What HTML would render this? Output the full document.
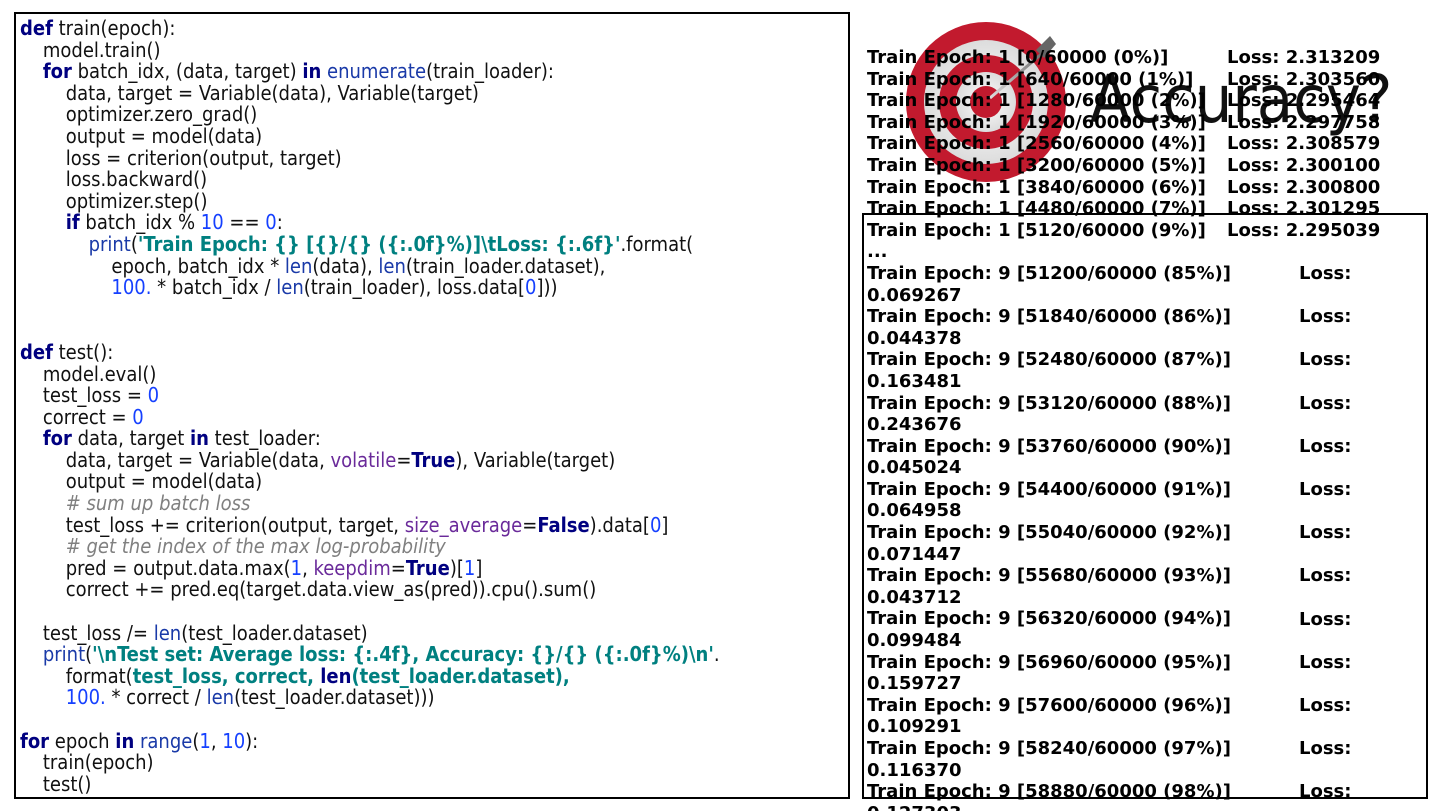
<!DOCTYPE html>
<html><head><meta charset="utf-8"><style>
html,body{margin:0;padding:0;background:#fff;width:1440px;height:811px;overflow:hidden;position:relative}
.box{position:absolute;border:2px solid #000;box-sizing:border-box}
pre{margin:0;font-family:"DejaVu Sans","Liberation Sans",sans-serif;}
.code{position:absolute;left:20px;top:18px;font-size:20px;line-height:21.6px;font-stretch:condensed;color:#111;white-space:pre}
.k{color:#000080;font-weight:bold}
.b{color:#1a3aa8}
.n{color:#1540ff}
.s{color:#008080;font-weight:bold}
.p{color:#6a2a9a}
.c{color:#808080;font-style:italic}
.out{position:absolute;font-family:"DejaVu Sans","Liberation Sans",sans-serif;font-weight:bold;font-size:18px;color:#000;line-height:21.6px;white-space:pre}
</style></head><body>
<div class="box" style="left:14px;top:12px;width:836px;height:787px"></div>
<pre class="code"><span class="k">def</span> train(epoch):
    model.train()
    <span class="k">for</span> batch_idx, (data, target) <span class="k">in</span> <span class="b">enumerate</span>(train_loader):
        data, target = Variable(data), Variable(target)
        optimizer.zero_grad()
        output = model(data)
        loss = criterion(output, target)
        loss.backward()
        optimizer.step()
        <span class="k">if</span> batch_idx % <span class="n">10</span> == <span class="n">0</span>:
            <span class="b">print</span>(<span class="s">'Train Epoch: {} [{}/{} ({:.0f}%)]\tLoss: {:.6f}'</span>.format(
                epoch, batch_idx * <span class="b">len</span>(data), <span class="b">len</span>(train_loader.dataset),
                <span class="n">100.</span> * batch_idx / <span class="b">len</span>(train_loader), loss.data[<span class="n">0</span>]))


<span class="k">def</span> test():
    model.eval()
    test_loss = <span class="n">0</span>
    correct = <span class="n">0</span>
    <span class="k">for</span> data, target <span class="k">in</span> test_loader:
        data, target = Variable(data, <span class="p">volatile</span>=<span class="k">True</span>), Variable(target)
        output = model(data)
        <span class="c"># sum up batch loss</span>
        test_loss += criterion(output, target, <span class="p">size_average</span>=<span class="k">False</span>).data[<span class="n">0</span>]
        <span class="c"># get the index of the max log-probability</span>
        pred = output.data.max(<span class="n">1</span>, <span class="p">keepdim</span>=<span class="k">True</span>)[<span class="n">1</span>]
        correct += pred.eq(target.data.view_as(pred)).cpu().sum()

    test_loss /= <span class="b">len</span>(test_loader.dataset)
    <span class="b">print</span>(<span class="s">'\nTest set: Average loss: {:.4f}, Accuracy: {}/{} ({:.0f}%)\n'</span>.
        format(<span class="s">test_loss, correct, <span class="k">len</span>(test_loader.dataset),</span>
        <span class="n">100.</span> * correct / <span class="b">len</span>(test_loader.dataset)))

<span class="k">for</span> epoch <span class="k">in</span> <span class="b">range</span>(<span class="n">1</span>, <span class="n">10</span>):
    train(epoch)
    test()</pre>

<svg style="position:absolute;left:900px;top:16px" width="180" height="175" viewBox="0 0 180 175">
<defs><radialGradient id="g" cx="50%" cy="50%" r="50%"><stop offset="0" stop-color="#fff"/><stop offset="1" stop-color="#dcdcdc"/></radialGradient>
<linearGradient id="a" x1="0" y1="1" x2="1" y2="0"><stop offset="0" stop-color="#ddd"/><stop offset="1" stop-color="#666"/></linearGradient></defs>
<circle cx="86" cy="86" r="80" fill="#c21a2e"/>
<circle cx="86" cy="86" r="62" fill="url(#g)"/>
<circle cx="86" cy="86" r="47" fill="#c21a2e"/>
<circle cx="86" cy="86" r="30" fill="url(#g)"/>
<circle cx="86" cy="86" r="16" fill="#c21a2e"/>
<line x1="90" y1="82" x2="146" y2="34" stroke="url(#a)" stroke-width="3"/>
<polygon points="136,34 150,20 156,28 144,42" fill="#666"/>
</svg>
<div style="position:absolute;left:1090px;top:60px;font-family:'DejaVu Sans','Liberation Sans',sans-serif;font-size:66px;font-weight:normal;line-height:80px;color:#111;font-stretch:condensed">Accuracy?</div>

<div class="out" style="left:867px;top:47px">Train Epoch: 1 [0/60000 (0%)]
Train Epoch: 1 [640/60000 (1%)]
Train Epoch: 1 [1280/60000 (2%)]
Train Epoch: 1 [1920/60000 (3%)]
Train Epoch: 1 [2560/60000 (4%)]
Train Epoch: 1 [3200/60000 (5%)]
Train Epoch: 1 [3840/60000 (6%)]
Train Epoch: 1 [4480/60000 (7%)]
Train Epoch: 1 [5120/60000 (9%)]
...
Train Epoch: 9 [51200/60000 (85%)]
0.069267
Train Epoch: 9 [51840/60000 (86%)]
0.044378
Train Epoch: 9 [52480/60000 (87%)]
0.163481
Train Epoch: 9 [53120/60000 (88%)]
0.243676
Train Epoch: 9 [53760/60000 (90%)]
0.045024
Train Epoch: 9 [54400/60000 (91%)]
0.064958
Train Epoch: 9 [55040/60000 (92%)]
0.071447
Train Epoch: 9 [55680/60000 (93%)]
0.043712
Train Epoch: 9 [56320/60000 (94%)]
0.099484
Train Epoch: 9 [56960/60000 (95%)]
0.159727
Train Epoch: 9 [57600/60000 (96%)]
0.109291
Train Epoch: 9 [58240/60000 (97%)]
0.116370
Train Epoch: 9 [58880/60000 (98%)]
0.127303</div>
<div class="out" style="left:1227px;top:47px">Loss: 2.313209
Loss: 2.303560
Loss: 2.295464
Loss: 2.297758
Loss: 2.308579
Loss: 2.300100
Loss: 2.300800
Loss: 2.301295
Loss: 2.295039</div>
<div class="out" style="left:1299px;top:263px">Loss:

Loss:

Loss:

Loss:

Loss:

Loss:

Loss:

Loss:

Loss:

Loss:

Loss:

Loss:

Loss:</div>
<div class="box" style="left:862px;top:213px;width:566px;height:586px;border-color:#000"></div>
</body></html>
